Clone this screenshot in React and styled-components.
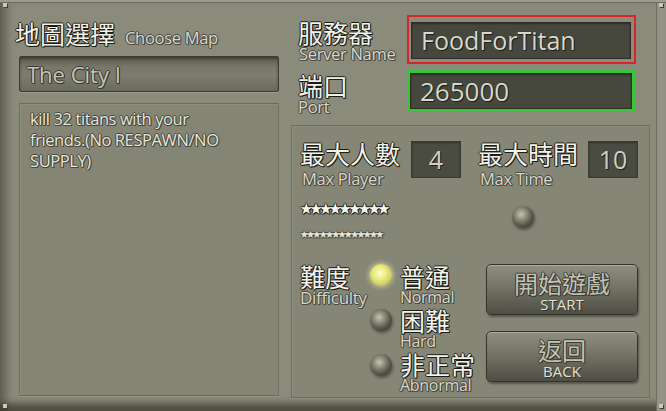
import React from 'react';
import styled, { createGlobalStyle, css } from 'styled-components';

const GlobalStyle = createGlobalStyle`
  html, body {
    margin: 0;
    padding: 0;
    background: #8b8b7c;
  }
`;

const LATIN = `'Open Sans', 'Noto Sans', 'Noto Sans CJK TC', sans-serif`;
const CJK = `'Noto Sans CJK TC', 'Noto Sans', sans-serif`;

const outline = (c) => css`
  text-shadow: -1px 0 ${c}, 1px 0 ${c}, 0 -1px ${c}, 0 1px ${c}, 1px 1px ${c};
`;

const Frame = styled.div`
  position: relative;
  width: 666px;
  height: 411px;
  box-sizing: border-box;
  display: flex;
  gap: 12px;
  padding: 0 16px 0 19px;
  background: #8b8b7c;
  overflow: hidden;
  box-shadow:
    inset 0 2px 0 #9c9c8e,
    inset 0 3px 0 #6c6c5f,
    inset -9px 0 0 #929285,
    inset -10px 0 0 #6e6e61,
    inset 9px 0 8px -3px rgba(40, 40, 30, 0.45),
    inset 0 -13px 6px -5px rgba(35, 35, 25, 0.55);
`;

const Screw = styled.span`
  position: absolute;
  width: 4px;
  height: 4px;
  background: #c8c8bc;
  box-shadow: 1px 1px 0 #3c3c33;
  ${(p) => p.$pos}
`;

const LeftCol = styled.div`
  width: 260px;
  display: flex;
  flex-direction: column;
  padding-top: 20px;
`;

const RightCol = styled.div`
  width: 359px;
  display: flex;
  flex-direction: column;
  padding-top: 15px;
`;

const TitleRow = styled.div`
  display: flex;
  align-items: baseline;
  gap: 10px;
  height: 26px;
  margin-left: -4px;
`;

const BigLabel = styled.div`
  font-family: ${CJK};
  font-size: 25px;
  line-height: 26px;
  color: #f2f2ea;
  white-space: nowrap;
  ${outline('#1c1c16')}
`;

const SubLabel = styled.div`
  font-family: ${LATIN};
  font-size: ${(p) => p.$size || 16.5}px;
  line-height: 17px;
  margin-top: ${(p) => p.$mt || 0}px;
  padding-left: ${(p) => p.$pl || 0}px;
  color: #d8d8cc;
  white-space: nowrap;
  letter-spacing: -0.3px;
  ${outline('#4a4a40')}
`;

const MapField = styled.div`
  margin-top: 10px;
  height: 36px;
  box-sizing: border-box;
  border: 1px solid #3c3c33;
  border-radius: 2px;
  background: linear-gradient(#5c5c4f 0%, #77776a 30%, #7d7d6f 55%, #6b6b5d 100%);
  box-shadow: inset 0 2px 3px rgba(0, 0, 0, 0.35), 0 1px 0 rgba(255, 255, 255, 0.15);
  font-family: ${LATIN};
  font-size: 22px;
  line-height: 34px;
  padding-left: 7px;
  color: #c6c6b8;
  ${outline('#3a3a31')}
`;

const Panel = styled.div`
  box-sizing: border-box;
  background: #858575;
  border: 1px solid #727264;
  border-top-color: #6a6a5d;
  border-left-color: #6f6f62;
  border-bottom-color: #6a6a5c;
  box-shadow: inset 1px 1px 0 rgba(255, 255, 255, 0.08), 0 1px 0 rgba(255, 255, 255, 0.1);
`;

const DescPanel = styled(Panel)`
  margin-top: 11px;
  height: 293px;
  padding: 4px 33px 0 10px;
  font-family: ${LATIN};
  font-size: 16.5px;
  line-height: 21px;
  color: #e6e6da;
  letter-spacing: -0.4px;
  ${outline('#46463d')}
`;

const FieldRow = styled.div`
  display: flex;
  align-items: flex-start;
  margin-top: ${(p) => p.$top || 0}px;
`;

const LabelBlock = styled.div`
  width: ${(p) => p.$w}px;
  flex-shrink: 0;
  padding-left: ${(p) => p.$pl || 0}px;
  padding-top: ${(p) => p.$pt || 0}px;
  box-sizing: border-box;
  display: flex;
  flex-direction: column;
`;

const InputWrap = styled.div`
  box-sizing: border-box;
  border: ${(p) => (p.$tone === 'red' ? '2px solid #d8242a' : '3px solid #39c43a')};
  padding: ${(p) => (p.$tone === 'red' ? '5px 3px 3px 2px' : '0')};
  width: ${(p) => (p.$tone === 'red' ? 229 : 228)}px;
`;

const InputBox = styled.div`
  box-sizing: border-box;
  height: ${(p) => p.$h}px;
  width: ${(p) => p.$w}px;
  background: #46473d;
  border: 1px solid #2e2f27;
  box-shadow: inset 0 1px 2px rgba(0, 0, 0, 0.4);
  padding-left: 9px;
  font-family: ${LATIN};
  font-size: ${(p) => p.$fs}px;
  line-height: ${(p) => p.$h - 2}px;
  color: #d8d8cc;
  text-shadow: 1px 1px 0 #1e1e18, 0 0 1px #1e1e18;
`;

const SettingsPanel = styled(Panel)`
  margin-top: 10px;
  height: 273px;
  padding: 14px 0 0 8px;
  display: flex;
  flex-direction: column;
  background: #868677;
`;

const StatRow = styled.div`
  display: flex;
  align-items: flex-start;
`;

const NumBox = styled.div`
  width: 50px;
  height: 37px;
  margin-top: 1px;
  margin-right: ${(p) => p.$mr || 0}px;
  box-sizing: border-box;
  background: #4a4b41;
  border: 1px solid #393a31;
  box-shadow: inset 0 1px 2px rgba(0, 0, 0, 0.35);
  text-align: center;
  font-family: ${LATIN};
  font-size: 25px;
  line-height: 35px;
  color: #cfcfc3;
  text-shadow: 1px 1px 0 #202019;
`;

const MiddleRow = styled.div`
  display: flex;
  align-items: flex-start;
  margin-top: 13px;
  height: 45px;
`;

const StarsCol = styled.div`
  width: 212px;
  display: flex;
  flex-direction: column;
  box-sizing: border-box;
`;

const Stars = styled.div`
  font-family: ${CJK};
  font-size: ${(p) => p.$size}px;
  line-height: ${(p) => p.$lh}px;
  margin-top: ${(p) => p.$top || 0}px;
  letter-spacing: ${(p) => p.$ls}px;
  color: ${(p) => p.$color};
  white-space: nowrap;
  ${(p) => outline(p.$edge)}
`;

const Radio = styled.div`
  width: 22px;
  height: 22px;
  flex-shrink: 0;
  border-radius: 50%;
  margin-top: ${(p) => p.$top || 0}px;
  background: ${(p) =>
    p.$on
      ? 'radial-gradient(circle at 45% 42%, #fdfdc4 0%, #ecec86 35%, #c9c95a 70%, #8e8e3e 100%)'
      : 'radial-gradient(circle at 42% 38%, #c6c6b4 0%, #9a9a88 22%, #5e5e50 55%, #33332a 85%, #25251e 100%)'};
  box-shadow: ${(p) =>
    p.$on
      ? '0 0 5px 1px rgba(236, 236, 160, 0.7)'
      : '1px 2px 3px rgba(20, 20, 15, 0.45)'};
`;

const DiffRow = styled.div`
  display: flex;
  align-items: flex-start;
  margin-top: 18px;
`;

const Options = styled.div`
  width: 116px;
  display: flex;
  flex-direction: column;
  gap: 1px;
`;

const Option = styled.div`
  display: flex;
  align-items: flex-start;
  gap: 8px;
`;

const OptionText = styled.div`
  display: flex;
  flex-direction: column;
`;

const Buttons = styled.div`
  width: 152px;
  display: flex;
  flex-direction: column;
  gap: 16px;
  margin-top: 1px;
`;

const Button = styled.div`
  height: 51px;
  box-sizing: border-box;
  border: 1px solid #34342c;
  border-radius: 5px;
  background: linear-gradient(#8f8f81 0%, #7a7a6c 35%, #626256 70%, #4e4e44 100%);
  box-shadow: inset 0 1px 0 rgba(255, 255, 255, 0.25), 1px 2px 2px rgba(30, 30, 22, 0.45);
  display: flex;
  flex-direction: column;
  align-items: center;
  padding-top: 5px;
`;

const ButtonTitle = styled.div`
  font-family: ${CJK};
  font-size: 24px;
  line-height: 26px;
  color: #c3c3b6;
  ${outline('#3b3b32')}
`;

const ButtonSub = styled.div`
  font-family: ${LATIN};
  font-size: 15px;
  line-height: 16px;
  color: #e0e0d6;
  text-shadow: 1px 1px 0 #33332b;
`;

export default function App() {
  return (
    <>
      <GlobalStyle />
      <Frame>
        <Screw $pos="left: 3px; top: 3px;" />
        <Screw $pos="right: 3px; top: 3px;" />
        <Screw $pos="left: 3px; bottom: 3px;" />
        <Screw $pos="right: 3px; bottom: 3px;" />
        <LeftCol>
          <TitleRow>
            <BigLabel>地圖選擇</BigLabel>
            <SubLabel>Choose Map</SubLabel>
          </TitleRow>
          <MapField>The City I</MapField>
          <DescPanel>kill 32 titans with your friends.(No RESPAWN/NO SUPPLY)</DescPanel>
        </LeftCol>

        <RightCol>
          <FieldRow>
            <LabelBlock $w={116} $pl={7} $pt={4}>
              <BigLabel>服務器</BigLabel>
              <SubLabel $pl={1}>Server Name</SubLabel>
            </LabelBlock>
            <InputWrap $tone="red">
              <InputBox $w={220} $h={37} $fs={25}>FoodForTitan</InputBox>
            </InputWrap>
          </FieldRow>

          <FieldRow $top={6}>
            <LabelBlock $w={116} $pl={7} $pt={2}>
              <BigLabel>端口</BigLabel>
              <SubLabel>Port</SubLabel>
            </LabelBlock>
            <InputWrap $tone="green">
              <InputBox $w={222} $h={36} $fs={26}>265000</InputBox>
            </InputWrap>
          </FieldRow>

          <SettingsPanel>
            <StatRow>
              <LabelBlock $w={111}>
                <BigLabel>最大人數</BigLabel>
                <SubLabel $mt={4} $pl={2}>Max Player</SubLabel>
              </LabelBlock>
              <NumBox $mr={17}>4</NumBox>
              <LabelBlock $w={110}>
                <BigLabel>最大時間</BigLabel>
                <SubLabel $mt={4} $pl={2}>Max Time</SubLabel>
              </LabelBlock>
              <NumBox>10</NumBox>
            </StatRow>

            <MiddleRow>
              <StarsCol>
                <Stars $size={12.5} $lh={16} $ls={-2.8} $color="#f6f6f0" $edge="#1c1c16">★★★★★★★★★</Stars>
                <Stars $size={8.5} $lh={11} $ls={-2.2} $top={12} $color="#e2e2d6" $edge="#4a4a40">★★★★★★★★★★★★★</Stars>
              </StarsCol>
              <Radio $top={6} />
            </MiddleRow>

            <DiffRow>
              <LabelBlock $w={70}>
                <BigLabel>難度</BigLabel>
                <SubLabel $size={17}>Difficulty</SubLabel>
              </LabelBlock>
              <Options>
                <Option>
                  <Radio $on $top={1} />
                  <OptionText>
                    <BigLabel>普通</BigLabel>
                    <SubLabel $size={16}>Normal</SubLabel>
                  </OptionText>
                </Option>
                <Option>
                  <Radio $top={2} />
                  <OptionText>
                    <BigLabel>困難</BigLabel>
                    <SubLabel $size={16}>Hard</SubLabel>
                  </OptionText>
                </Option>
                <Option>
                  <Radio $top={3} />
                  <OptionText>
                    <BigLabel>非正常</BigLabel>
                    <SubLabel $size={16}>Abnormal</SubLabel>
                  </OptionText>
                </Option>
              </Options>
              <Buttons>
                <Button>
                  <ButtonTitle>開始遊戲</ButtonTitle>
                  <ButtonSub>START</ButtonSub>
                </Button>
                <Button>
                  <ButtonTitle>返回</ButtonTitle>
                  <ButtonSub>BACK</ButtonSub>
                </Button>
              </Buttons>
            </DiffRow>
          </SettingsPanel>
        </RightCol>
      </Frame>
    </>
  );
}
